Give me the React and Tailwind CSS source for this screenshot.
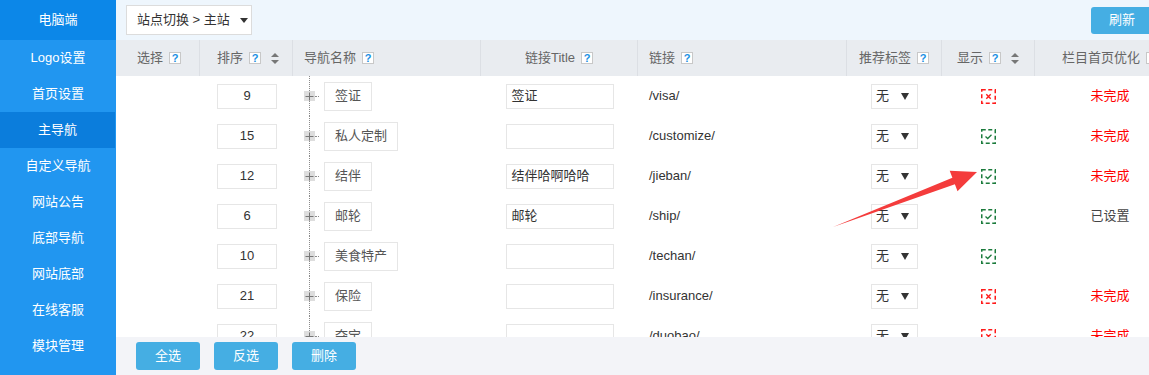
import React from 'react';

const cols = 'grid grid-cols-[84px_93px_188px_157px_209px_95px_93px_150px]';

const menu = ['Logo设置', '首页设置', '主导航', '自定义导航', '网站公告', '底部导航', '网站底部', '在线客服', '模块管理'];

const rows = [
  { sort: 9, name: '签证', title: '签证', link: '/visa/', show: false, seo: '未完成' },
  { sort: 15, name: '私人定制', title: '', link: '/customize/', show: true, seo: '未完成' },
  { sort: 12, name: '结伴', title: '结伴哈啊哈哈', link: '/jieban/', show: true, seo: '未完成' },
  { sort: 6, name: '邮轮', title: '邮轮', link: '/ship/', show: true, seo: '已设置' },
  { sort: 10, name: '美食特产', title: '', link: '/techan/', show: true, seo: '' },
  { sort: 21, name: '保险', title: '', link: '/insurance/', show: false, seo: '未完成' },
  { sort: 22, name: '夺宝', title: '', link: '/duobao/', show: false, seo: '未完成' },
];

function Help() {
  return (
    <span className="ml-[6px] inline-flex h-[12px] w-[12px] items-center justify-center border border-[#c8c8c8] bg-white text-[11px] font-bold leading-none text-[#1a8fe3]">
      ?
    </span>
  );
}

function SortIcon() {
  return (
    <svg width="8" height="11" viewBox="0 0 8 11" className="ml-[10px]">
      <path d="M4 0 L8 4 L0 4 Z" fill="#777" />
      <path d="M0 7 L8 7 L4 11 Z" fill="#777" />
    </svg>
  );
}

function HeadCell({ children, align = 'left', pl = '', last }) {
  return (
    <div
      className={`flex h-full items-center ${align === 'center' ? 'justify-center' : ''} ${pl} ${
        last ? '' : 'border-r border-[#dcdfe4]'
      }`}
    >
      {children}
    </div>
  );
}

function ShowIcon({ on }) {
  const c = on ? '#1b7b3c' : '#ff1a1a';
  return (
    <svg width="15" height="15" viewBox="0 0 15 15">
      <rect x="0.75" y="0.75" width="13.5" height="13.5" fill="none" stroke={c} strokeWidth="1.5" strokeDasharray="4 2.5" />
      {on ? (
        <path d="M4.5 7.5 L6.7 9.5 L10.5 5.8" fill="none" stroke={c} strokeWidth="1.3" />
      ) : (
        <path d="M5.3 5.3 L9.7 9.7 M9.7 5.3 L5.3 9.7" stroke={c} strokeWidth="1.4" />
      )}
    </svg>
  );
}

function Row({ r }) {
  return (
    <div className={`${cols} h-[40px] items-center text-[13px] text-[#333]`}>
      <div />
      <div className="pl-[17px]">
        <div className="flex h-[25px] w-[60px] items-center justify-center border border-[#e6e6e6]">{r.sort}</div>
      </div>
      <div className="flex h-full items-center pl-[11px]">
        <div className="flex h-full w-[11px] flex-col items-center">
          <div className="flex-1 border-l border-dotted border-[#8a8a8a]" />
          <div className="flex h-[10px] w-[11px] items-center justify-center bg-[#dddddd]">
            <svg width="9" height="9" viewBox="0 0 9 9">
              <path d="M0.5 4.5 H8.5 M4.5 0.5 V8.5" stroke="#777" strokeWidth="1" />
            </svg>
          </div>
          <div className="flex-1 border-l border-dotted border-[#8a8a8a]" />
        </div>
        <div className="w-[4px] border-t border-dotted border-[#8a8a8a]" />
        <div className="ml-[5px] flex h-[29px] items-center border border-[#e6e6e6] px-[10px] text-[#555]">{r.name}</div>
      </div>
      <div className="flex justify-center">
        <div className="flex h-[25px] w-[108px] items-center border border-[#e6e6e6] pl-[5px]">{r.title}</div>
      </div>
      <div className="pl-[11px]">{r.link}</div>
      <div className="flex justify-center">
        <div className="flex h-[25px] w-[47px] items-center justify-between border border-[#e6e6e6] pl-[4px] pr-[8px]">
          <span>无</span>
          <svg width="8" height="7" viewBox="0 0 8 7">
            <path d="M0 0 H8 L4 7 Z" fill="#333" />
          </svg>
        </div>
      </div>
      <div className="flex justify-center">
        <ShowIcon on={r.show} />
      </div>
      <div className={`text-center ${r.seo === '未完成' ? 'text-[#ff0000]' : 'text-[#444]'}`}>{r.seo}</div>
    </div>
  );
}

export default function App() {
  return (
    <div className="relative flex h-[375px] w-[1149px] overflow-hidden font-['Liberation_Sans','Noto_Sans_CJK_SC',sans-serif] text-[13px]">
      {/* 左侧菜单 */}
      <aside className="flex w-[116px] shrink-0 flex-col bg-[#2196f0] text-white">
        <div className="flex h-[40px] items-center justify-center bg-[#0c87e8]">电脑端</div>
        {menu.map((m) => (
          <div
            key={m}
            className={`flex h-[36px] items-center justify-center ${m === '主导航' ? 'mr-px bg-[#0b7ddc]' : ''}`}
          >
            {m}
          </div>
        ))}
      </aside>

      <main className="flex min-w-0 flex-1 flex-col overflow-hidden bg-white">
        <div className="flex h-[40px] shrink-0 items-center bg-[#eef6fd] pl-[10px]">
          <div className="flex h-[30px] w-[126px] items-center border border-[#dcdcdc] bg-white pl-[10px] text-[#333]">
            站点切换 &gt; 主站
            <svg width="8" height="5" viewBox="0 0 8 5" className="ml-[10px]">
              <path d="M0 0 H8 L4 5 Z" fill="#333" />
            </svg>
          </div>
          <button className="-mr-1 ml-auto h-[27px] w-[62px] rounded-[3px] bg-[#45aee3] text-white">刷新</button>
        </div>

        <div className="flex min-h-0 w-[1069px] flex-1 flex-col">
          <div className={`${cols} h-[36px] shrink-0 bg-[#e9ecf0] text-[#666]`}>
            <HeadCell pl="pl-[21px]">选择<Help /></HeadCell>
            <HeadCell pl="pl-[17px]">排序<Help /><SortIcon /></HeadCell>
            <HeadCell pl="pl-[11px]">导航名称<Help /></HeadCell>
            <HeadCell align="center">链接Title<Help /></HeadCell>
            <HeadCell pl="pl-[11px]">链接<Help /></HeadCell>
            <HeadCell align="center">推荐标签<Help /></HeadCell>
            <HeadCell align="center">显示<Help /><SortIcon /></HeadCell>
            <HeadCell align="center" last>栏目首页优化<Help /></HeadCell>
          </div>
          <div className="min-h-0 flex-1 overflow-hidden">
            {rows.map((r) => (
              <Row key={r.link} r={r} />
            ))}
          </div>
        </div>

        <div className="flex h-[38px] shrink-0 items-center gap-[14px] bg-[#f3f4f8] pl-[20px]">
          {['全选', '反选', '删除'].map((b) => (
            <button key={b} className="h-[28px] w-[64px] rounded-[3px] bg-[#45aee3] text-white">
              {b}
            </button>
          ))}
        </div>
      </main>

      {/* 标注箭头 */}
      <svg className="pointer-events-none absolute left-0 top-0" width="1149" height="375">
        <polygon points="833,227 952.4,177.7 949.7,170.7 977,172 957.5,191.3 954.9,184.3" fill="#f43c3c" />
      </svg>
    </div>
  );
}
